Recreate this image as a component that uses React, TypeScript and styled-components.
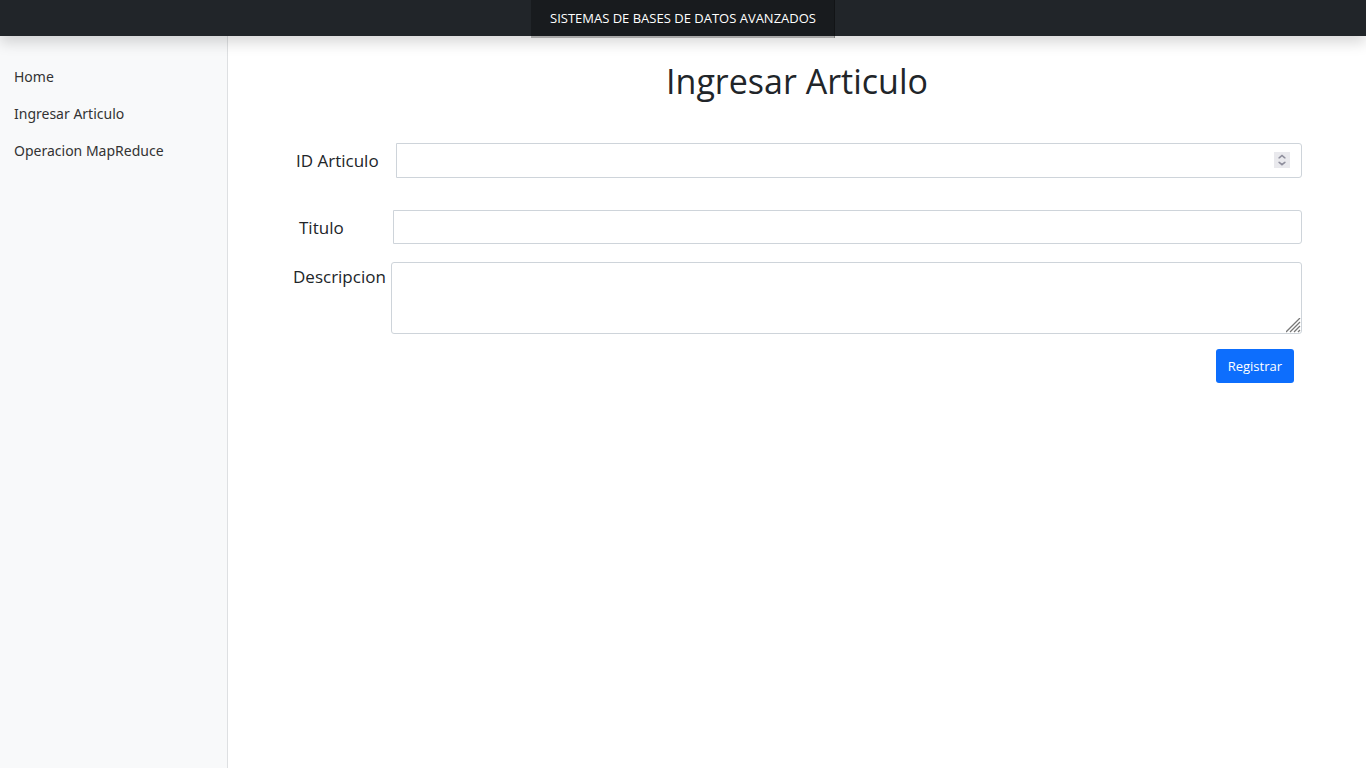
import React from "react";
import styled, { createGlobalStyle } from "styled-components";

const GlobalStyle = createGlobalStyle`
  *, *::before, *::after { box-sizing: border-box; }
  body {
    margin: 0;
    background: #fff;
    color: #212529;
    font-family: "Segoe UI", "Open Sans", "Noto Sans", sans-serif;
    font-size: 14px;
  }
`;

const Page = styled.div`
  display: flex;
  flex-direction: column;
  min-height: 100vh;
`;

const Header = styled.header`
  position: relative;
  z-index: 1;
  display: flex;
  justify-content: center;
  height: 36px;
  background: #212529;
  box-shadow: 0 7px 14px rgba(0, 0, 0, 0.15);
`;

const Brand = styled.a`
  flex: none;
  height: 38px;
  padding: 0 19px;
  background: rgba(0, 0, 0, 0.25);
  box-shadow: inset -1px 0 0 rgba(0, 0, 0, 0.25);
  color: #fff;
  font-size: 13px;
  line-height: 36px;
  text-decoration: none;
`;

const Body = styled.div`
  display: flex;
  flex: 1;
`;

const Sidebar = styled.nav`
  width: 228px;
  flex: none;
  padding-top: 22px;
  background: #f8f9fa;
  border-right: 1px solid #dee0e2;
  font-family: "Segoe UI", "Noto Sans", sans-serif;
`;

const NavList = styled.ul`
  margin: 0;
  padding: 0;
  list-style: none;
`;

const NavLink = styled.a`
  display: block;
  padding: 0 14px;
  color: #333;
  line-height: 37px;
  text-decoration: none;
`;

const Main = styled.main`
  flex: 1;
  min-width: 0;
`;

const Title = styled.h1`
  margin: 0;
  padding-top: 24px;
  font-size: 34px;
  font-weight: 400;
  line-height: 43px;
  text-align: center;
`;

const Form = styled.form`
  padding: 40px 64px 0 61px;
`;

const Row = styled.div<{ $gap: number }>`
  display: flex;
  align-items: flex-start;
  margin-bottom: ${(p) => p.$gap}px;
`;

const Label = styled.label<{ $width: number; $indent: number }>`
  flex: none;
  width: ${(p) => p.$width}px;
  padding-left: ${(p) => p.$indent}px;
  font-size: 17px;
  line-height: 36px;
  white-space: nowrap;
`;

const DescriptionLabel = styled(Label)`
  line-height: 30px;
`;

const Field = styled.div`
  position: relative;
  display: flex;
  flex: 1;
`;

const Input = styled.input<{ $height: number }>`
  width: 100%;
  height: ${(p) => p.$height}px;
  padding: 5px 11px;
  border: 1px solid #ced4da;
  border-radius: 0 3px 3px 0;
  background: #fff;
  color: inherit;
  font: inherit;
  appearance: textfield;
  &::-webkit-inner-spin-button { appearance: none; margin: 0; }
`;

const TextArea = styled.textarea`
  display: block;
  width: 100%;
  height: 72px;
  padding: 5px 11px;
  border: 1px solid #ced4da;
  border-radius: 3px;
  background: #fff;
  color: inherit;
  font: inherit;
  resize: none;
`;

const Spinner = styled.svg`
  position: absolute;
  top: 9px;
  right: 12px;
  background: #e9e9ed;
`;

const Grip = styled.svg`
  position: absolute;
  right: 1px;
  bottom: 1px;
  pointer-events: none;
`;

const Actions = styled.div`
  display: flex;
  justify-content: flex-end;
  padding-right: 8px;
`;

const Submit = styled.button`
  height: 34px;
  padding: 0 12px;
  border: 0;
  border-radius: 3px;
  background: #0d6efd;
  color: #fff;
  font: inherit;
  font-size: 13px;
`;

const links = ["Home", "Ingresar Articulo", "Operacion MapReduce"];

export default function App() {
  return (
    <Page>
      <GlobalStyle />
      <Header>
        <Brand href="#">SISTEMAS DE BASES DE DATOS AVANZADOS</Brand>
      </Header>
      <Body>
        <Sidebar>
          <NavList>
            {links.map((text) => (
              <li key={text}>
                <NavLink href="#">{text}</NavLink>
              </li>
            ))}
          </NavList>
        </Sidebar>
        <Main>
          <Title>Ingresar Articulo</Title>
          <Form onSubmit={(e) => e.preventDefault()}>
            <Row $gap={31}>
              <Label htmlFor="id" $width={107} $indent={7}>ID Articulo</Label>
              <Field>
                <Input id="id" type="number" $height={35} />
                <Spinner width="16" height="16" viewBox="0 0 16 16" fill="none" stroke="#8f8f9d" strokeWidth="1.6" aria-hidden="true">
                  <path d="M5.2 6.4V5.8L8 3.5l2.8 2.3v.6M5.2 9.8v.6L8 12.7l2.8-2.3v-.6" />
                </Spinner>
              </Field>
            </Row>
            <Row $gap={16}>
              <Label htmlFor="titulo" $width={104} $indent={10}>Titulo</Label>
              <Field>
                <Input id="titulo" type="text" $height={34} />
              </Field>
            </Row>
            <Row $gap={15}>
              <DescriptionLabel htmlFor="descripcion" $width={102} $indent={4}>Descripcion</DescriptionLabel>
              <Field>
                <TextArea id="descripcion" />
                <Grip width="15" height="15" viewBox="0 0 15 15" fill="none" stroke="#777" strokeWidth="1.3" aria-hidden="true">
                  <path d="M0 14L14 0M4 14L14 4M8 14l6-6M12 14l2-2" />
                </Grip>
              </Field>
            </Row>
            <Actions>
              <Submit type="submit">Registrar</Submit>
            </Actions>
          </Form>
        </Main>
      </Body>
    </Page>
  );
}
